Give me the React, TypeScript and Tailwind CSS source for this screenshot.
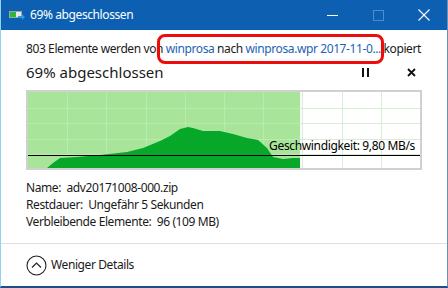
import React from 'react';

const pts: [number, number][] = [
  [19, 76], [25, 71], [32, 66], [49, 65], [72, 63], [99, 60], [115, 56], [132, 49],
  [142, 44], [152, 37], [160, 35], [165, 36], [175, 39], [192, 39], [205, 42],
  [219, 46], [230, 48], [239, 56], [245, 65], [255, 67], [265, 66], [272, 66],
];

const Chart: React.FC = () => {
  const w = 392;
  const h = 76;
  const cols = Array.from({ length: 9 }, (_, i) => Math.round((i + 1) * 39.2) + 0.5);
  const rows = Array.from({ length: 4 }, (_, i) => Math.round((i + 1) * 15.5) + 0.5);
  const area = `M19,${h} ` + pts.map(([x, y]) => `L${x},${y}`).join(' ') + ` L272,${h} Z`;
  return (
    <div className="relative mt-[8px] h-[80px] w-[396px] border-2 border-[#d0d0d0]">
      <svg width={w} height={h} className="block">
        <rect x="0" y="0" width="272" height={h} fill="#a8e59b" />
        {cols.map((x) => (
          <line key={x} x1={x} x2={x} y1="0" y2={h} stroke={x < 272 ? '#b9eaae' : '#d6eed3'} />
        ))}
        {rows.map((y) => (
          <React.Fragment key={y}>
            <line x1="0" x2="272" y1={y} y2={y} stroke="#b9eaae" />
            <line x1="272" x2={w} y1={y} y2={y} stroke="#d6eed3" />
          </React.Fragment>
        ))}
        <path d={area} fill="#07a82a" />
        <line x1="0" x2={w} y1="63.5" y2="63.5" stroke="#000" />
      </svg>
      <span className="absolute right-[5px] top-[46px] text-[12px] leading-[16px] tracking-[-0.35px] text-black">
        Geschwindigkeit: 9,80 MB/s
      </span>
    </div>
  );
};

const App: React.FC = () => {
  return (
    <div
      className="relative flex h-[288px] w-[448px] flex-col overflow-hidden border-b-2 border-l border-r border-b-[#1b4f86] border-l-[#8fd3ef] border-r-[#6d8fb3] bg-white text-[#1a1a1a]"
      style={{ fontFamily: '"Noto Sans", "Open Sans", sans-serif' }}
    >
      {/* title bar */}
      <div className="flex h-[30px] shrink-0 items-center bg-[#0c5fb1] text-white">
        <svg width="16" height="12" viewBox="0 0 16 12" className="ml-[8px]">
          <rect x="0.5" y="2.5" width="12" height="6" fill="#e8e8e8" stroke="#9aa4ad" />
          <rect x="1" y="3" width="6" height="5" fill="#2fb43c" />
          <path d="M9 7 h4 v-2 l3 3 l-3 3 v-2 h-4 z" fill="#2d9be0" />
        </svg>
        <span className="ml-[5px] text-[12px] leading-[16px] tracking-[-0.4px]">69% abgeschlossen</span>
        <div className="ml-auto flex h-full items-center">
          <div className="flex h-full w-[46px] items-center justify-center">
            <div className="h-px w-[11px] bg-white" />
          </div>
          <div className="flex h-full w-[46px] items-center justify-center">
            <div className="h-[11px] w-[11px] border border-[#4f8ccc]" />
          </div>
          <div className="flex h-full w-[46px] items-center justify-center">
            <svg width="12" height="12" viewBox="0 0 12 12">
              <path d="M0.5 0.5 L11.5 11.5 M11.5 0.5 L0.5 11.5" stroke="#fff" strokeWidth="1.1" />
            </svg>
          </div>
        </div>
      </div>

      {/* body */}
      <div className="flex flex-col px-[25px]">
        <div className="mt-[11px] whitespace-nowrap text-[12px] leading-[16px] tracking-[-0.4px]">
          803 Elemente werden von <span className="text-[#1d63b3]">winprosa</span> nach{' '}
          <span className="text-[#1d63b3]">winprosa.wpr 2017-11-0...</span> kopiert
        </div>
        <div className="mt-[5px] flex h-[20px] items-center">
          <span className="text-[15px] leading-[20px]">69% abgeschlossen</span>
          <svg width="7" height="9" viewBox="0 0 7 9" className="ml-auto mr-[38px]">
            <rect x="0" y="0" width="2" height="9" fill="#111" />
            <rect x="5" y="0" width="2" height="9" fill="#111" />
          </svg>
          <svg width="9" height="9" viewBox="0 0 9 9" className="mr-[6px]">
            <path d="M1 1 L8 8 M8 1 L1 8" stroke="#111" strokeWidth="1.8" />
          </svg>
        </div>
        <Chart />
        <div className="mt-[9px] flex flex-col text-[12px] leading-[17px] tracking-[-0.4px]">
          <span>Name:&nbsp; adv20171008-000.zip</span>
          <span>Restdauer:&nbsp; Ungefähr 5 Sekunden</span>
          <span>Verbleibende Elemente:&nbsp; 96 (109 MB)</span>
        </div>
      </div>

      <div className="mt-[13px] h-px w-full bg-[#e0dde6]" />
      <div className="flex flex-1 items-center px-[25px]">
        <svg width="21" height="21" viewBox="0 0 21 21">
          <circle cx="10.5" cy="10.5" r="9.5" fill="none" stroke="#222" strokeWidth="1.1" />
          <path d="M6 12.5 L10.5 8 L15 12.5" fill="none" stroke="#222" strokeWidth="1.2" />
        </svg>
        <span className="ml-[4px] text-[12px] leading-[16px] tracking-[-0.4px]">Weniger Details</span>
      </div>

      {/* highlight */}
      <div className="absolute left-[156px] top-[34px] h-[30px] w-[227px] rounded-[8px] border-[3px] border-[#ee0b0b]" />
    </div>
  );
};

export default App;
